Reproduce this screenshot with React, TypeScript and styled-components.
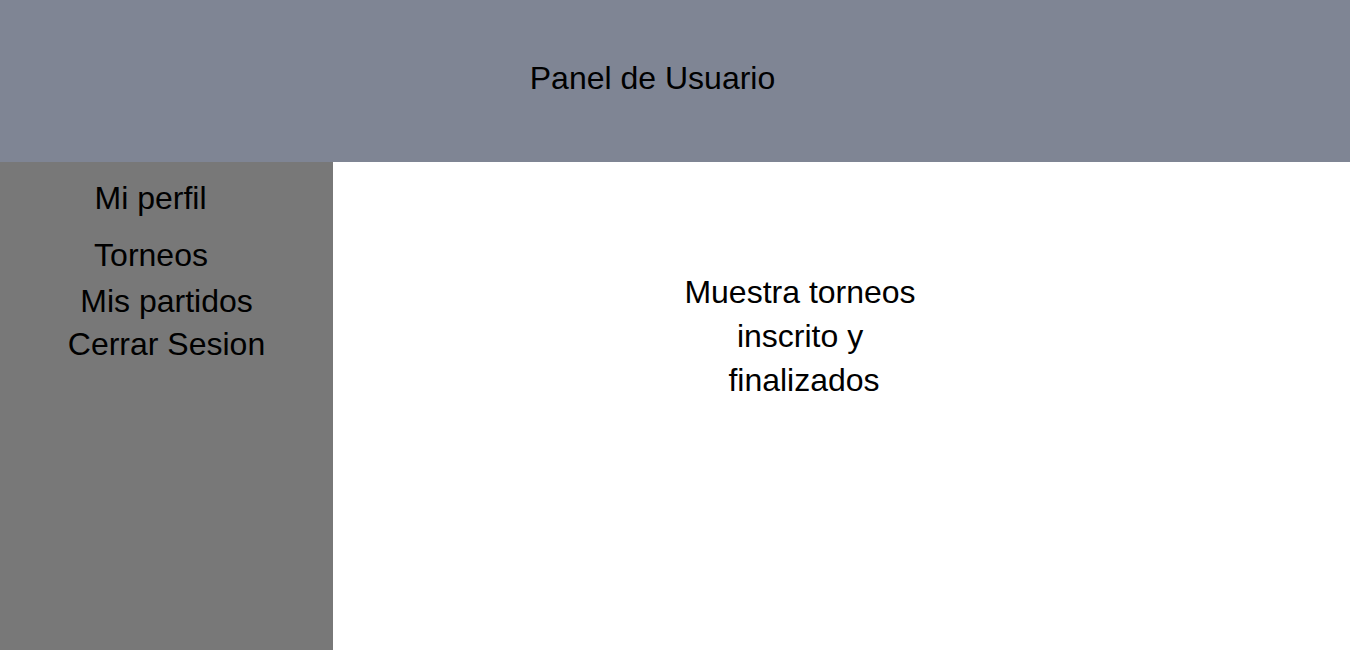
import React from "react";
import styled, { createGlobalStyle } from "styled-components";

const Global = createGlobalStyle`
  html, body { margin: 0; padding: 0; background: #ffffff; }
  body { font-family: "Liberation Sans", Arial, sans-serif; color: #000; }
`;

const Page = styled.div`
  display: grid;
  grid-template-columns: 333px 1fr;
  grid-template-rows: 162px 488px;
  width: 1350px;
  height: 650px;
  overflow: hidden;
`;

const Header = styled.header`
  grid-column: 1 / 3;
  background: #7f8594;
  padding: 60px 45px 0 0;
  box-sizing: border-box;
`;

const Title = styled.h1`
  margin: 0;
  font-weight: 400;
  font-size: 32px;
  line-height: 36px;
  text-align: center;
`;

const Sidebar = styled.nav`
  background: #787878;
  display: flex;
  flex-direction: column;
  padding-top: 18px;
`;

const NavItem = styled.a<{ $gap: number; $shift: number }>`
  display: block;
  margin-top: ${(p) => p.$gap}px;
  padding-right: ${(p) => p.$shift}px;
  font-size: 32px;
  line-height: 36px;
  text-align: center;
  color: #000;
  text-decoration: none;
`;

const Main = styled.main`
  background: #ffffff;
  padding: 108px 0 0 327px;
`;

const Notice = styled.p`
  margin: 0;
  width: 280px;
  font-size: 32px;
  line-height: 44px;
  text-align: center;
`;

const Line = styled.span<{ $shift: number }>`
  display: block;
  padding-left: ${(p) => p.$shift}px;
`;

const items = [
  { label: "Mi perfil", gap: 0, shift: 32 },
  { label: "Torneos", gap: 21, shift: 31 },
  { label: "Mis partidos", gap: 10, shift: 0 },
  { label: "Cerrar Sesion", gap: 7, shift: 0 },
];

export default function App() {
  return (
    <>
      <Global />
      <Page>
        <Header>
          <Title>Panel de Usuario</Title>
        </Header>
        <Sidebar>
          {items.map((it) => (
            <NavItem key={it.label} href="#" $gap={it.gap} $shift={it.shift}>
              {it.label}
            </NavItem>
          ))}
        </Sidebar>
        <Main>
          <Notice>
            <Line $shift={0}>Muestra torneos</Line>
            <Line $shift={0}>inscrito y</Line>
            <Line $shift={8}>finalizados</Line>
          </Notice>
        </Main>
      </Page>
    </>
  );
}
